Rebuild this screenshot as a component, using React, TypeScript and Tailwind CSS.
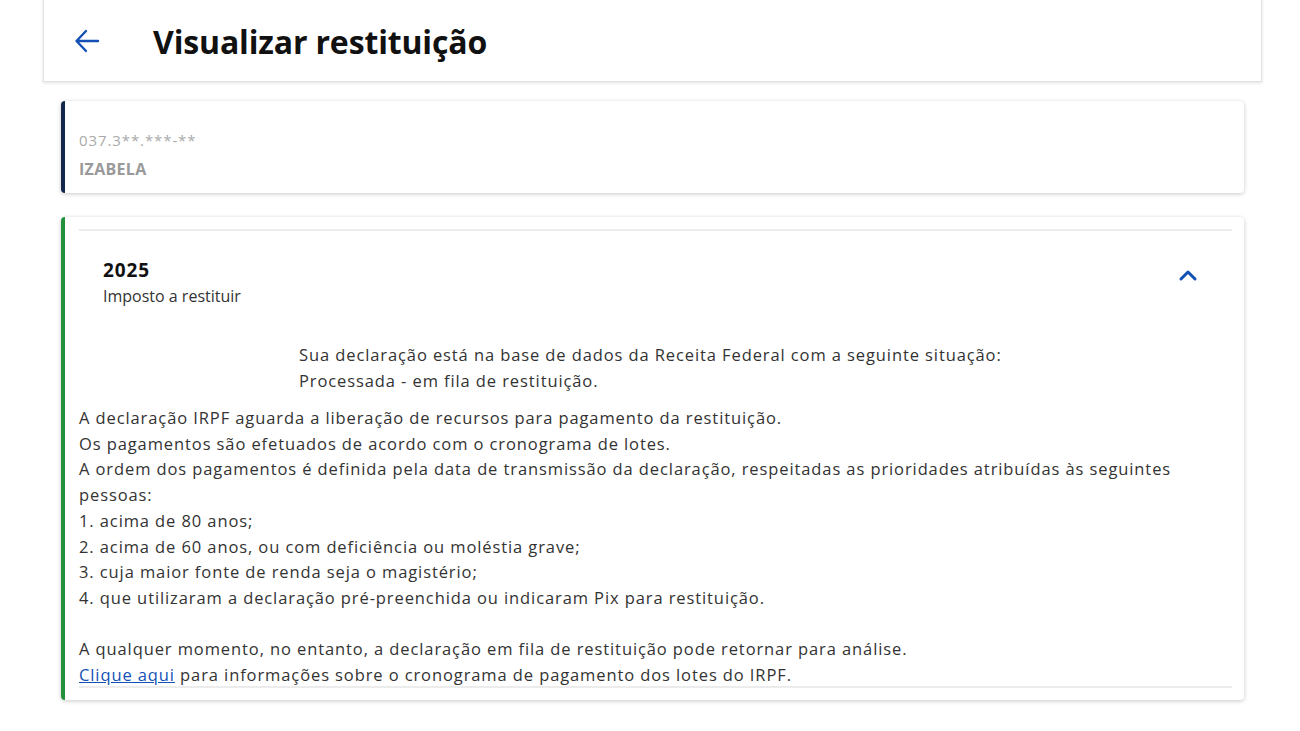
import React from 'react';

const font = { fontFamily: '"Open Sans", "Liberation Sans", sans-serif' };

const ChevronUp = () => (
  <svg width="20" height="14" viewBox="0 0 20 14" fill="none">
    <path d="M3 11 L10 4 L17 11" stroke="#1351b4" strokeWidth="3" strokeLinecap="round" strokeLinejoin="round" />
  </svg>
);

const ArrowLeft = () => (
  <svg width="28" height="28" viewBox="0 0 28 28" fill="none">
    <path d="M25 14 H4 M13 4 L3.5 14 L13 24" stroke="#1351b4" strokeWidth="2.4" strokeLinecap="round" strokeLinejoin="round" />
  </svg>
);

const App = () => {
  return (
    <div className="min-h-screen bg-white text-[#333]" style={font}>
      <div className="px-[43px] pr-[38px]">
        <div className="h-[90px] -mt-2 pt-2 bg-white border border-[#e2e2e2] shadow-[0_1px_3px_rgba(0,0,0,0.12)] flex items-center pl-[29px]">
          <ArrowLeft />
          <h1 className="ml-[52px] mt-[2px] text-[32px] font-bold tracking-[-0.15px] text-[#111]">Visualizar restituição</h1>
        </div>
      </div>

      <div className="pl-[61px] pr-[56px]">
        <div className="mt-[19px] h-[92px] bg-white rounded-[4px] border-l-4 border-[#14284b] shadow-[0_1px_4px_rgba(0,0,0,0.22)] pl-[14px] pt-[29px]">
          <p className="text-[15px] text-[#aaa] leading-5 tracking-[0.9px]">037.3**.***-**</p>
          <p className="mt-[9px] text-[16px] font-bold text-[#999] leading-5 tracking-[0.3px]">IZABELA</p>
        </div>

        <div className="mt-[24px] bg-white rounded-[4px] border-l-4 border-[#23913a] shadow-[0_1px_4px_rgba(0,0,0,0.22)] pl-[14px] pr-[12px] pt-[12px] pb-[12px]">
          <div className="border-t-2 border-[#ececec]" />
          <div className="flex justify-between items-start pl-[24px] pr-[34px] pt-[27px]">
            <div>
              <p className="text-[19px] font-bold text-[#111] leading-6 tracking-[0.9px]">2025</p>
              <p className="mt-[4px] text-[16px] text-[#333] leading-5 tracking-[0px]">Imposto a restituir</p>
            </div>
            <div className="mt-[10px]">
              <ChevronUp />
            </div>
          </div>

          <div className="pl-[220px] mt-[36px] text-[16.5px] leading-[26px] tracking-[0.9px]">
            <p>Sua declaração está na base de dados da Receita Federal com a seguinte situação:</p>
            <p>Processada - em fila de restituição.</p>
          </div>

          <div className="mt-[11px] text-[16.5px] leading-[25.7px] tracking-[0.9px]">
            <p>A declaração IRPF aguarda a liberação de recursos para pagamento da restituição.</p>
            <p>Os pagamentos são efetuados de acordo com o cronograma de lotes.</p>
            <p>A ordem dos pagamentos é definida pela data de transmissão da declaração, respeitadas as prioridades atribuídas às seguintes pessoas:</p>
            <p>1. acima de 80 anos;</p>
            <p>2. acima de 60 anos, ou com deficiência ou moléstia grave;</p>
            <p>3. cuja maior fonte de renda seja o magistério;</p>
            <p>4. que utilizaram a declaração pré-preenchida ou indicaram Pix para restituição.</p>
            <p className="h-[25.7px]" />
            <p>A qualquer momento, no entanto, a declaração em fila de restituição pode retornar para análise.</p>
            <p>
              <a href="#" className="text-[#1351b4] underline">Clique aqui</a> para informações sobre o cronograma de pagamento dos lotes do IRPF.
            </p>
          </div>
          <div className="-mt-[2px] border-t-2 border-[#ececec]" />
        </div>
      </div>
    </div>
  );
};

export default App;
